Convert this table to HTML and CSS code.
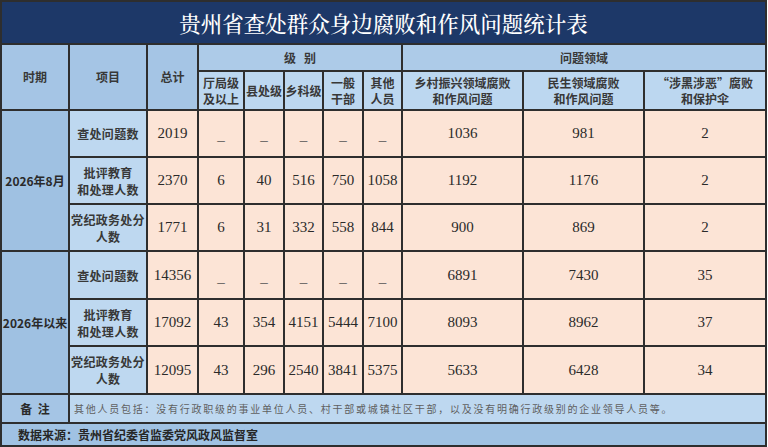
FILE: index.html
```html
<!DOCTYPE html>
<html lang="zh-CN">
<head>
<meta charset="utf-8">
<title>贵州省查处群众身边腐败和作风问题统计表</title>
<link rel="stylesheet" href="styles.css">
</head>
<body>
<table class="stats">
  <colgroup>
    <col class="c-period"><col class="c-item"><col class="c-total">
    <col class="c-l1"><col class="c-l2"><col class="c-l3"><col class="c-l4"><col class="c-l5">
    <col class="c-d"><col class="c-d"><col class="c-d3">
  </colgroup>
  <thead>
    <tr class="r-title"><th colspan="11" class="title">贵州省查处群众身边腐败和作风问题统计表</th></tr>
    <tr class="r-h1">
      <th rowspan="2" class="hd-dark">时期</th>
      <th rowspan="2" class="hd-dark">项目</th>
      <th rowspan="2" class="hd-dark">总计</th>
      <th colspan="5" class="hd-mid">级&nbsp;&nbsp;&nbsp;别</th>
      <th colspan="3" class="hd-mid">问题领域</th>
    </tr>
    <tr class="r-h2">
      <th class="hd-light">厅局级<br>及以上</th>
      <th class="hd-light">县处级</th>
      <th class="hd-light">乡科级</th>
      <th class="hd-light">一般<br>干部</th>
      <th class="hd-light">其他<br>人员</th>
      <th class="hd-light">乡村振兴领域腐败<br>和作风问题</th>
      <th class="hd-light">民生领域腐败<br>和作风问题</th>
      <th class="hd-light">“涉黑涉恶”腐败<br>和保护伞</th>
    </tr>
  </thead>
  <tbody>
    <tr class="r-d">
      <th rowspan="3" class="period">2026年8月</th>
      <th class="item">查处问题数</th>
      <td>2019</td><td class="na">_</td><td class="na">_</td><td class="na">_</td><td class="na">_</td><td class="na">_</td>
      <td>1036</td><td>981</td><td>2</td>
    </tr>
    <tr class="r-d">
      <th class="item">批评教育<br>和处理人数</th>
      <td>2370</td><td>6</td><td>40</td><td>516</td><td>750</td><td>1058</td>
      <td>1192</td><td>1176</td><td>2</td>
    </tr>
    <tr class="r-d">
      <th class="item">党纪政务处分<br>人数</th>
      <td>1771</td><td>6</td><td>31</td><td>332</td><td>558</td><td>844</td>
      <td>900</td><td>869</td><td>2</td>
    </tr>
    <tr class="r-d2">
      <th rowspan="3" class="period">2026年以来</th>
      <th class="item">查处问题数</th>
      <td>14356</td><td class="na">_</td><td class="na">_</td><td class="na">_</td><td class="na">_</td><td class="na">_</td>
      <td>6891</td><td>7430</td><td>35</td>
    </tr>
    <tr class="r-d">
      <th class="item">批评教育<br>和处理人数</th>
      <td>17092</td><td>43</td><td>354</td><td>4151</td><td>5444</td><td>7100</td>
      <td>8093</td><td>8962</td><td>37</td>
    </tr>
    <tr class="r-d2">
      <th class="item">党纪政务处分<br>人数</th>
      <td>12095</td><td>43</td><td>296</td><td>2540</td><td>3841</td><td>5375</td>
      <td>5633</td><td>6428</td><td>34</td>
    </tr>
  </tbody>
  <tfoot>
    <tr class="r-note">
      <th class="note-label">备&nbsp;&nbsp;注</th>
      <td colspan="10" class="note">其他人员包括：没有行政职级的事业单位人员、村干部或城镇社区干部，以及没有明确行政级别的企业领导人员等。</td>
    </tr>
    <tr class="r-src">
      <td colspan="11" class="source">数据来源：贵州省纪委省监委党风政风监督室</td>
    </tr>
  </tfoot>
</table>
</body>
</html>
```

FILE: styles.css
```css
html, body {
  margin: 0;
  padding: 0;
  background: #ffffff;
}

.stats {
  width: 767px;
  table-layout: fixed;
  border-collapse: collapse;
  border: 2px solid #3a3a3a;
  font-family: "Noto Sans CJK SC", "Noto Sans", sans-serif;
}

.c-period { width: 68px; }
.c-item { width: 78px; }
.c-total { width: 51px; }
.c-l1 { width: 46px; }
.c-l2 { width: 40px; }
.c-l3 { width: 39px; }
.c-l4 { width: 40px; }
.c-l5 { width: 39px; }
.c-d { width: 121px; }
.c-d3 { width: 122px; }

.stats th,
.stats td {
  border: 2px solid #2e2e2e;
  padding: 0;
  text-align: center;
  vertical-align: middle;
}

.r-title { height: 43px; }
.r-h1 { height: 27px; }
.r-h2 { height: 39px; }
.r-d { height: 47px; }
.r-d2 { height: 48px; }
.r-note { height: 29px; }
.r-src { height: 23px; }

.title {
  background: #1d3868;
  color: #ffffff;
  font-family: "Noto Serif CJK SC", "Noto Sans CJK SC", serif;
  font-weight: 500;
  font-size: 21.5px;
  letter-spacing: 0;
  padding-top: 1px;
  border-color: #3a3a3a;
}

.stats thead th:not(.title) {
  font-size: 12px;
  font-weight: 700;
  color: #383838;
  line-height: 16px;
}

.hd-dark { background: #a5c5e5; }
.hd-mid { background: #adcbe8; }
.hd-light { background: #bcd7f0; }

.period {
  background: #9fc1e2;
  font-size: 12px;
  font-weight: 700;
  color: #2a2a2a;
}

.item {
  background: #bed8f0;
  font-size: 12px;
  font-weight: 700;
  color: #383838;
  line-height: 17px;
  letter-spacing: 0.3px;
}

.stats tbody td {
  background: #fce4d6;
  font-family: "Liberation Serif", "Times New Roman", serif;
  font-size: 15px;
  color: #2a2a2a;
}

.stats tbody td.na {
  color: #555555;
  padding-top: 4px;
}

.note-label {
  background: #a5c5e5;
  font-size: 12px;
  font-weight: 700;
  color: #2a2a2a;
}

.note {
  background: #bed8f0;
  text-align: left !important;
  padding-left: 4px !important;
  font-size: 10px;
  letter-spacing: 1.75px;
  color: #606060;
}

.source {
  background: #a0c2e3;
  text-align: left !important;
  padding-left: 16px !important;
  font-size: 12px;
  font-weight: 700;
  color: #262626;
}
```
